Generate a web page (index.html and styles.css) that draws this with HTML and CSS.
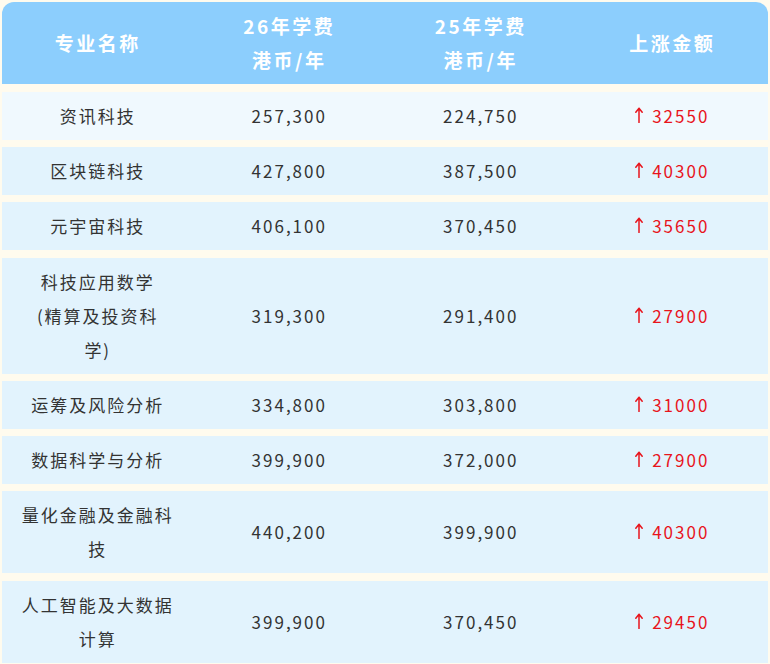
FILE: index.html
```html
<!DOCTYPE html>
<html lang="zh-CN">
<head>
<meta charset="utf-8">
<title>学费对比</title>
<link rel="stylesheet" href="styles.css">
</head>
<body>
<div class="table">
  <div class="row head">
    <div class="cell">专业名称</div>
    <div class="cell">26年学费<br>港币/年</div>
    <div class="cell">25年学费<br>港币/年</div>
    <div class="cell">上涨金额</div>
  </div>
  <div class="row first">
    <div class="cell">资讯科技</div>
    <div class="cell">257,300</div>
    <div class="cell">224,750</div>
    <div class="cell up"><svg class="arrow" viewBox="0 0 8 16"><path d="M4 15.5V1.5M0.8 5.2L4 1.2L7.2 5.2"/></svg>32550</div>
  </div>
  <div class="row">
    <div class="cell">区块链科技</div>
    <div class="cell">427,800</div>
    <div class="cell">387,500</div>
    <div class="cell up"><svg class="arrow" viewBox="0 0 8 16"><path d="M4 15.5V1.5M0.8 5.2L4 1.2L7.2 5.2"/></svg>40300</div>
  </div>
  <div class="row">
    <div class="cell">元宇宙科技</div>
    <div class="cell">406,100</div>
    <div class="cell">370,450</div>
    <div class="cell up"><svg class="arrow" viewBox="0 0 8 16"><path d="M4 15.5V1.5M0.8 5.2L4 1.2L7.2 5.2"/></svg>35650</div>
  </div>
  <div class="row">
    <div class="cell">科技应用数学<br>(精算及投资科<br>学)</div>
    <div class="cell">319,300</div>
    <div class="cell">291,400</div>
    <div class="cell up"><svg class="arrow" viewBox="0 0 8 16"><path d="M4 15.5V1.5M0.8 5.2L4 1.2L7.2 5.2"/></svg>27900</div>
  </div>
  <div class="row">
    <div class="cell">运筹及风险分析</div>
    <div class="cell">334,800</div>
    <div class="cell">303,800</div>
    <div class="cell up"><svg class="arrow" viewBox="0 0 8 16"><path d="M4 15.5V1.5M0.8 5.2L4 1.2L7.2 5.2"/></svg>31000</div>
  </div>
  <div class="row">
    <div class="cell">数据科学与分析</div>
    <div class="cell">399,900</div>
    <div class="cell">372,000</div>
    <div class="cell up"><svg class="arrow" viewBox="0 0 8 16"><path d="M4 15.5V1.5M0.8 5.2L4 1.2L7.2 5.2"/></svg>27900</div>
  </div>
  <div class="row">
    <div class="cell">量化金融及金融科技</div>
    <div class="cell">440,200</div>
    <div class="cell">399,900</div>
    <div class="cell up"><svg class="arrow" viewBox="0 0 8 16"><path d="M4 15.5V1.5M0.8 5.2L4 1.2L7.2 5.2"/></svg>40300</div>
  </div>
  <div class="row">
    <div class="cell">人工智能及大数据计算</div>
    <div class="cell">399,900</div>
    <div class="cell">370,450</div>
    <div class="cell up"><svg class="arrow" viewBox="0 0 8 16"><path d="M4 15.5V1.5M0.8 5.2L4 1.2L7.2 5.2"/></svg>29450</div>
  </div>
</div>
</body>
</html>
```

FILE: styles.css
```css
html, body {
  margin: 0;
  padding: 0;
  background: #fffbee;
}
body {
  font-family: "Noto Sans CJK SC", "Noto Sans", sans-serif;
  color: #333333;
  overflow: hidden;
}
.table {
  margin: 2px 0 0 2px;
  width: 766px;
  display: flex;
  flex-direction: column;
  gap: 7.25px;
}
.row {
  display: grid;
  grid-template-columns: repeat(4, 1fr);
  background: #e2f3fd;
}
.row.first {
  background: #f0f9fe;
}
.row.head {
  background: #8ccefd;
  border-radius: 12px 12px 0 0;
  margin-bottom: 0.5px;
}
.cell {
  display: flex;
  align-items: center;
  justify-content: center;
  text-align: center;
  padding: 7px 18px;
  font-size: 17px;
  line-height: 34px;
  letter-spacing: 2px;
}
.head .cell {
  color: #ffffff;
  font-weight: bold;
  font-size: 19px;
  letter-spacing: 2.5px;
}
.up {
  color: #e8141c;
}
.arrow {
  width: 8px;
  height: 16px;
  margin-right: 9px;
  margin-top: -2px;
  fill: none;
  stroke: currentColor;
  stroke-width: 1.5;
  stroke-linecap: round;
  stroke-linejoin: round;
}
```
